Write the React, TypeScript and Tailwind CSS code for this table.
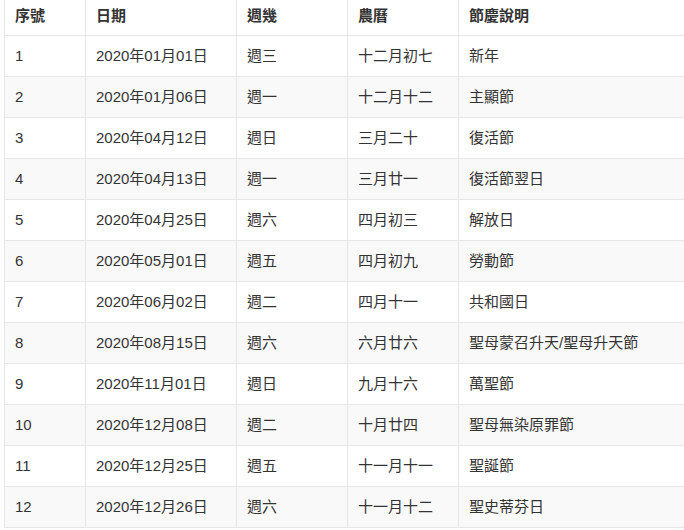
import React from 'react';

const rows = [
  ['1', '2020年01月01日', '週三', '十二月初七', '新年'],
  ['2', '2020年01月06日', '週一', '十二月十二', '主顯節'],
  ['3', '2020年04月12日', '週日', '三月二十', '復活節'],
  ['4', '2020年04月13日', '週一', '三月廿一', '復活節翌日'],
  ['5', '2020年04月25日', '週六', '四月初三', '解放日'],
  ['6', '2020年05月01日', '週五', '四月初九', '勞動節'],
  ['7', '2020年06月02日', '週二', '四月十一', '共和國日'],
  ['8', '2020年08月15日', '週六', '六月廿六', '聖母蒙召升天/聖母升天節'],
  ['9', '2020年11月01日', '週日', '九月十六', '萬聖節'],
  ['10', '2020年12月08日', '週二', '十月廿四', '聖母無染原罪節'],
  ['11', '2020年12月25日', '週五', '十一月十一', '聖誕節'],
  ['12', '2020年12月26日', '週六', '十一月十二', '聖史蒂芬日'],
];

const headers = ['序號', '日期', '週幾', '農曆', '節慶說明'];
const widths = ['w-[81px]', 'w-[151px]', 'w-[111px]', 'w-[111px]', 'w-[300px]'];

export default function App() {
  return (
    <div
      className="w-[684px] h-[530px] overflow-hidden bg-white text-[15px] leading-[20px] text-[#333]"
      style={{ fontFamily: '"Liberation Sans", "Noto Sans CJK TC", sans-serif' }}
    >
      <table className="ml-[4px] w-[754px] table-fixed border-collapse">
        <thead>
          <tr>
            {headers.map((h, i) => (
              <th
                key={h}
                className={`${widths[i]} border border-t-0 border-[#e6e6e6] px-[10px] pt-[6px] pb-[9px] text-left font-bold`}
              >
                {h}
              </th>
            ))}
          </tr>
        </thead>
        <tbody>
          {rows.map((r, ri) => (
            <tr key={r[0]} className={ri % 2 === 1 ? 'bg-[#f9f9f9]' : 'bg-white'}>
              {r.map((c, ci) => (
                <td key={ci} className="border border-[#e6e6e6] px-[10px] py-[10px] whitespace-nowrap">
                  {c}
                </td>
              ))}
            </tr>
          ))}
        </tbody>
      </table>
    </div>
  );
}
